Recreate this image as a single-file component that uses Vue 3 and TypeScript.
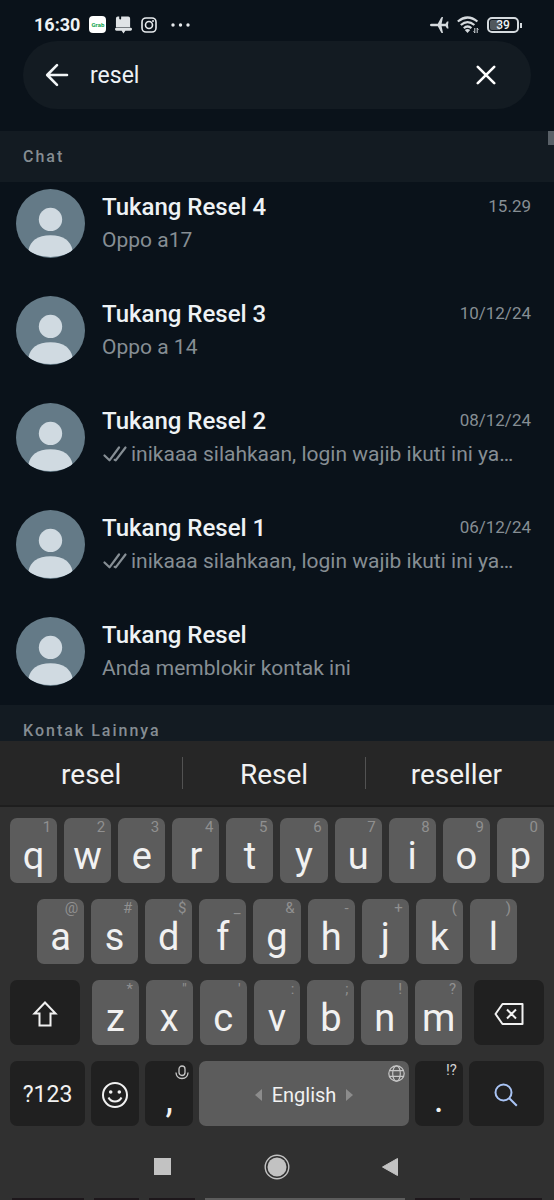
<script setup lang="ts">
import { ref } from 'vue'

interface Chat {
  name: string
  message: string
  date?: string
  read?: boolean
}

interface Key {
  label: string
  hint: string
}

const query = ref<string>('resel')

const chats: Chat[] = [
  { name: 'Tukang Resel 4', message: 'Oppo a17', date: '15.29' },
  { name: 'Tukang Resel 3', message: 'Oppo a 14', date: '10/12/24' },
  { name: 'Tukang Resel 2', message: 'inikaaa silahkaan, login wajib ikuti ini ya…', date: '08/12/24', read: true },
  { name: 'Tukang Resel 1', message: 'inikaaa silahkaan, login wajib ikuti ini ya…', date: '06/12/24', read: true },
  { name: 'Tukang Resel', message: 'Anda memblokir kontak ini' },
]

const suggestions: string[] = ['resel', 'Resel', 'reseller']

const toKeys = (letters: string, hints: string): Key[] =>
  [...letters].map((label, i) => ({ label, hint: hints[i] }))

const topKeys = toKeys('qwertyuiop', '1234567890')
const homeKeys = toKeys('asdfghjkl', '@#$_&-+()')
const lowerKeys = toKeys('zxcvbnm', '*"\':;!?')
</script>

<template>
  <div class="screen">
    <header class="status">
      <div class="status-side">
        <span class="clock">16:30</span>
        <span class="grab">Grab</span>
        <svg width="17" height="18" viewBox="0 0 18 18" aria-hidden="true">
          <path d="M3 0h1.500v2.500l1 1 1-1V0H14q2 0 2 2v9.500H1V2q0-2 2-2zM1.500 12h15q1.500 0 1.500 1.500T16.500 15.200H11L9 18l-2-2.800H1.500Q0 15 0 13.500T1.500 12z" fill="#dfe3e6" />
        </svg>
        <svg class="ic-insta" width="16" height="16" viewBox="0 0 16 16" fill="none" stroke="#e8ebee" aria-hidden="true">
          <rect x="1" y="1" width="14" height="14" rx="4" stroke-width="1.600" />
          <circle cx="8" cy="8" r="3.500" stroke-width="1.600" />
          <circle cx="12" cy="4" r="1" fill="#e8ebee" stroke="none" />
        </svg>
        <svg width="20" height="4" viewBox="0 0 20 4" fill="#e8ebee" aria-hidden="true">
          <circle cx="2" cy="2" r="1.700" /><circle cx="9.500" cy="2" r="1.700" /><circle cx="17" cy="2" r="1.700" />
        </svg>
      </div>
      <div class="status-side right">
        <svg width="19" height="16" viewBox="0 0 19 16" fill="#d5dade" aria-hidden="true">
          <path d="M0 8q0-1.200 1.500-1.200h6.300L11.200.6q.4-.6 1-.6h.8l-1.400 6.800h4L17 4.600h1.500L18 8l.5 3.400H17l-1.400-2.200h-4L13 16h-.8q-.6 0-1-.6L7.800 9.200H1.500Q0 9.200 0 8z" />
        </svg>
        <svg width="22" height="18" viewBox="0 0 22 18" fill="none" stroke="#d5dade" stroke-width="2.200" aria-hidden="true">
          <path d="M.8 5.500Q10.500-2.500 20.400 5.500M3.800 9Q10.500 3.200 17.400 9M6.800 12.200Q10.500 8.800 14.400 12.200" />
          <path d="M7.800 14Q10.500 11.800 13.200 14L10.500 17z" fill="#d5dade" stroke="none" />
          <path d="M17.800 12v5M20.200 12v5M16.600 15.300l1.200 1.500M20.200 12.200l1.200 1.500" stroke-width="1" />
        </svg>
        <span class="battery">39</span>
      </div>
    </header>

    <form class="search" role="search" @submit.prevent>
      <button type="button" class="plain" aria-label="Kembali">
        <svg width="24" height="24" viewBox="0 0 24 24" fill="none" stroke="#f2f5f7" stroke-width="2.600" stroke-linecap="round" stroke-linejoin="round">
          <path d="M22 12H2.500M12 2.200L2.200 12l9.800 9.800" />
        </svg>
      </button>
      <input v-model="query" type="text" aria-label="Cari" />
      <button type="button" class="plain" aria-label="Hapus" @click="query = ''">
        <svg width="20" height="20" viewBox="0 0 20 20" fill="none" stroke="#fff" stroke-width="2.600" stroke-linecap="round">
          <path d="M1.800 1.800l16.400 16.400M18.200 1.800L1.800 18.200" />
        </svg>
      </button>
    </form>

    <main class="results">
      <h2>Chat</h2>
      <ul class="chats">
        <li v-for="chat in chats" :key="chat.name" class="chat">
          <svg class="avatar" viewBox="0 0 68 68" aria-hidden="true">
            <clipPath id="round"><circle cx="34" cy="34" r="34" /></clipPath>
            <g clip-path="url(#round)">
              <rect width="68" height="68" fill="#647a87" />
              <circle cx="34" cy="30" r="11.500" fill="#d0dae1" />
              <path d="M12 61Q15 45.500 34 45.500T56 61Q46 67 34 67T12 61z" fill="#d0dae1" />
            </g>
          </svg>
          <div class="body">
            <div class="line">
              <strong>{{ chat.name }}</strong>
              <time v-if="chat.date">{{ chat.date }}</time>
            </div>
            <p>
              <svg v-if="chat.read" width="25" height="16" viewBox="0 0 25 16" fill="none" stroke="#868e94" stroke-width="2.200" stroke-linecap="round" stroke-linejoin="round" aria-hidden="true">
                <path d="M2.500 9.500l5 4.800L17 1.500M12.700 13.800l1 .5L23.500 1.500" />
              </svg>
              <span>{{ chat.message }}</span>
            </p>
          </div>
        </li>
      </ul>
      <h2>Kontak Lainnya</h2>
      <span class="thumb"></span>
    </main>

    <section class="keyboard" aria-label="Keyboard">
      <div class="suggestions">
        <button v-for="word in suggestions" :key="word" type="button">{{ word }}</button>
      </div>
      <div class="keys">
        <div class="row">
          <button v-for="k in topKeys" :key="k.label" type="button" class="key">
            {{ k.label }}<small>{{ k.hint }}</small>
          </button>
        </div>
        <div class="row home">
          <button v-for="k in homeKeys" :key="k.label" type="button" class="key">
            {{ k.label }}<small>{{ k.hint }}</small>
          </button>
        </div>
        <div class="row lower">
          <button type="button" class="key dark" aria-label="Shift">
            <svg width="26" height="26" viewBox="0 0 26 26" fill="none" stroke="#f1f1f1" stroke-width="2">
              <path d="M13 1.500L2.500 12.500h5v12h11v-12h5z" />
            </svg>
          </button>
          <div class="letters">
            <button v-for="k in lowerKeys" :key="k.label" type="button" class="key">
              {{ k.label }}<small>{{ k.hint }}</small>
            </button>
          </div>
          <button type="button" class="key dark" aria-label="Backspace">
            <svg width="30" height="22" viewBox="0 0 30 22" fill="none" stroke="#f1f1f1" stroke-width="2" stroke-linejoin="round">
              <path d="M8.500 1H28.500V21H8.500L1.500 11zM13 6.500l9 9M22 6.500l-9 9" />
            </svg>
          </button>
        </div>
        <div class="bottom">
          <button type="button" class="key dark mode">?123</button>
          <button type="button" class="key dark" aria-label="Emoji">
            <svg width="28" height="28" viewBox="0 0 28 28" fill="none" stroke="#f1f1f1" stroke-width="2">
              <circle cx="14" cy="14" r="12" />
              <path d="M7.500 16.500Q9.500 20.500 14 20.500T20.500 16.500" />
              <circle cx="9.700" cy="11" r="1.800" fill="#f1f1f1" stroke="none" />
              <circle cx="18.300" cy="11" r="1.800" fill="#f1f1f1" stroke="none" />
            </svg>
          </button>
          <button type="button" class="key dark punct">
            ,
            <svg class="corner" width="14" height="15" viewBox="0 0 14 15" fill="none" stroke="#c6c6c6" stroke-width="1.300" aria-hidden="true">
              <rect x="4" y="1" width="6" height="9.500" rx="3" />
              <path d="M1 7.500q.3 6 6 6t6-6" />
            </svg>
          </button>
          <button type="button" class="key space">
            <svg width="7" height="12" viewBox="0 0 7 12" fill="#8c8c8c" aria-hidden="true"><path d="M7 0v12L0 6z" /></svg>
            <span>English</span>
            <svg width="7" height="12" viewBox="0 0 7 12" fill="#8c8c8c" aria-hidden="true"><path d="M0 0v12l7-6z" /></svg>
            <svg class="corner" width="17" height="17" viewBox="0 0 17 17" fill="none" stroke="#c6c6c6" stroke-width="1.200" aria-hidden="true">
              <circle cx="8.500" cy="8.500" r="7.700" />
              <ellipse cx="8.500" cy="8.500" rx="3.800" ry="7.700" />
              <path d="M1.500 5.700h14M1.500 11.300h14" />
            </svg>
          </button>
          <button type="button" class="key dark punct">.<small class="bright">!?</small></button>
          <button type="button" class="key dark" aria-label="Cari">
            <svg width="24" height="24" viewBox="0 0 24 24" fill="none" stroke="#a9c4f5" stroke-width="2">
              <circle cx="9.500" cy="9.500" r="8" /><path d="M15.300 15.300l7.500 7.500" />
            </svg>
          </button>
        </div>
      </div>
      <nav class="nav">
        <button type="button" class="plain" aria-label="Aplikasi terbaru">
          <svg width="26" height="26" viewBox="0 0 26 26" fill="#c2c2c2"><rect x="4" y="4" width="17" height="17" /></svg>
        </button>
        <button type="button" class="plain" aria-label="Beranda">
          <svg width="26" height="26" viewBox="0 0 26 26" fill="#c2c2c2">
            <circle cx="13" cy="13" r="9.500" /><circle cx="13" cy="13" r="11.800" fill="none" stroke="#c2c2c2" stroke-width="1.400" />
          </svg>
        </button>
        <button type="button" class="plain" aria-label="Kembali">
          <svg width="26" height="26" viewBox="0 0 26 26" fill="#c2c2c2"><path d="M19.500 4.500v17L4.500 13z" stroke="#c2c2c2" stroke-linejoin="round" /></svg>
        </button>
      </nav>
      <div class="edge" aria-hidden="true"><i></i><i></i><i></i><i class="light"></i><i></i><i></i></div>
    </section>
  </div>
</template>

<style>
body {
  margin: 0;
  background: #0a121a;
}
</style>

<style scoped>
.screen {
  display: flex;
  flex-direction: column;
  height: 100vh;
  overflow: hidden;
  background: #0a121a;
  color: #eef2f5;
  font-family: Roboto, "Noto Sans", sans-serif;
}
button,
input {
  padding: 0;
  border: 0;
  background: none;
  color: inherit;
  font-family: inherit;
}
svg {
  display: block;
  flex: none;
}
.status {
  display: flex;
  justify-content: space-between;
  align-items: center;
  box-sizing: border-box;
  height: 41px;
  padding: 8px 32px 0 34px;
}
.status-side {
  display: flex;
  align-items: center;
  gap: 9px;
}
.status-side.right {
  gap: 8px;
}
.clock {
  font-size: 18px;
  font-weight: 700;
}
.grab {
  width: 17px;
  border-radius: 4px;
  background: #fff;
  color: #12a550;
  font-size: 6px;
  font-weight: 700;
  line-height: 17px;
  text-align: center;
}
.ic-insta {
  margin-right: 5px;
}
.battery {
  position: relative;
  box-sizing: border-box;
  width: 32px;
  margin-right: 3px;
  border: 2px solid #d5dade;
  border-radius: 5px;
  background: linear-gradient(90deg, #51585d 40%, transparent 40%) content-box;
  padding: 1px;
  font-size: 12px;
  font-weight: 500;
  line-height: 10px;
  text-align: center;
}
.battery::after {
  content: "";
  position: absolute;
  top: 4px;
  right: -5px;
  width: 2px;
  height: 5px;
  background: #d5dade;
}
.search {
  display: flex;
  align-items: center;
  flex: none;
  gap: 21px;
  height: 68px;
  margin: 0 23px 22px;
  padding: 0 35px 0 22px;
  box-sizing: border-box;
  border-radius: 34px;
  background: #131b22;
}
.search input {
  flex: 1;
  min-width: 0;
  outline: 0;
  font-size: 23px;
}
.results {
  position: relative;
  flex: 1;
  min-height: 0;
  overflow: hidden;
}
h2 {
  margin: 0;
  padding: 0 23px;
  background: #131b22;
  color: #858d93;
  font-size: 16px;
  font-weight: 500;
  line-height: 51px;
  letter-spacing: 2px;
}
.chats {
  display: flex;
  flex-direction: column;
  gap: 38px;
  margin: 0;
  padding: 7px 23px 19px 16px;
  list-style: none;
}
.chat {
  display: flex;
  align-items: center;
  gap: 17px;
}
.avatar {
  width: 69px;
  height: 69px;
}
.body {
  display: flex;
  flex-direction: column;
  flex: 1;
  gap: 5px;
  min-width: 0;
}
.line {
  display: flex;
  justify-content: space-between;
  align-items: flex-start;
}
strong {
  font-size: 24px;
  font-weight: 500;
  line-height: 28px;
}
time {
  color: #868e94;
  font-size: 17px;
  line-height: 26px;
}
p {
  display: flex;
  align-items: center;
  gap: 4px;
  margin: 0;
  color: #868e94;
  font-size: 21px;
  line-height: 28px;
  white-space: nowrap;
}
.thumb {
  position: absolute;
  top: 0;
  right: 0;
  width: 6px;
  height: 14px;
  background: #596067;
}
.keyboard {
  flex: none;
  background: #303030;
  color: #f1f1f1;
}
.suggestions {
  display: grid;
  grid-template-columns: repeat(3, 1fr);
  align-items: center;
  height: 64px;
  padding-right: 7px;
  border-bottom: 2px solid #1e1e1e;
  background: #262626;
}
.suggestions button {
  box-sizing: border-box;
  height: 32px;
  padding-top: 3px;
  font-size: 28px;
  line-height: 29px;
}
.suggestions button + button {
  border-left: 1px solid #525252;
}
.keys {
  display: flex;
  flex-direction: column;
  gap: 16px;
  padding: 11px 10px 0;
}
.row {
  display: flex;
  gap: 7px;
}
.home {
  padding: 0 27px;
}
.lower {
  gap: 12px;
}
.letters {
  display: flex;
  flex: 370;
  gap: 7px;
}
.bottom {
  display: grid;
  grid-template-columns: 75fr 48fr 48fr 209fr 48fr 75fr;
  gap: 6px;
}
.key {
  position: relative;
  display: flex;
  flex: 1;
  align-items: flex-end;
  justify-content: center;
  box-sizing: border-box;
  height: 65px;
  min-width: 0;
  padding-bottom: 5px;
  border-radius: 7px;
  background: #5c5c5c;
  font-size: 38px;
  line-height: 44px;
}
.key.dark,
.key.space {
  align-items: center;
  padding: 3px 0 0;
}
.key.dark {
  flex: 70;
  background: #202020;
}
.key.mode {
  font-size: 23px;
}
.key.punct {
  align-items: flex-end;
  padding: 0 0 5px;
}
.key.space {
  gap: 10px;
  font-size: 20px;
}
small {
  position: absolute;
  top: 0;
  right: 6px;
  color: #909090;
  font-size: 15px;
  line-height: 18px;
}
.bright {
  color: #d0d0d0;
}
.corner {
  position: absolute;
  top: 4px;
  right: 4px;
}
.nav {
  display: flex;
  justify-content: center;
  gap: 88px;
  padding: 28px 0 18px;
}
.edge {
  display: grid;
  grid-template-columns: 75fr 48fr 48fr 209fr 48fr 75fr;
  gap: 10px;
  padding: 0 12px;
}
.edge i {
  height: 2px;
  background: #1d171b;
}
.edge .light {
  background: #5c5c5c;
}
</style>
